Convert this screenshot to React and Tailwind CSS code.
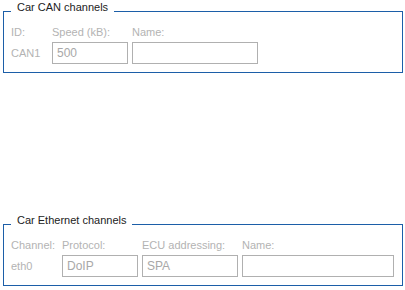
export default function App() {
  return (
    <div className="w-[405px] h-[290px] bg-white font-['Liberation_Sans',Arial,sans-serif] text-[11px] pt-[1px]">
      <fieldset className="mx-[3px] w-[400px] border border-[#1c5ea8] pl-[7px] pt-[5px] pb-[8px]">
        <legend className="px-[6px] pb-[7px] leading-[13px] text-[11px] text-[#222]">
          Car CAN channels
        </legend>
        <div className="grid grid-cols-[37px_76px_126px] gap-x-[4px] gap-y-[3px] items-center text-[#b3b3b3] leading-[13px]">
          <span>ID:</span>
          <span>Speed (kB):</span>
          <span>Name:</span>
          <span>CAN1</span>
          <input
            readOnly
            value="500"
            className="h-[22px] w-full border border-[#b0b0b0] px-[4px] text-[12px] text-[#a8a8a8] outline-none"
          />
          <input
            readOnly
            value=""
            className="h-[22px] w-full border border-[#b0b0b0] px-[4px] text-[12px] text-[#a8a8a8] outline-none"
          />
        </div>
      </fieldset>

      <fieldset className="mx-[3px] mt-[141px] w-[400px] border border-[#1c5ea8] pl-[7px] pt-[5px] pb-[8px]">
        <legend className="px-[6px] pb-[7px] leading-[13px] text-[11px] text-[#222]">
          Car Ethernet channels
        </legend>
        <div className="grid grid-cols-[47px_76px_96px_152px] gap-x-[4px] gap-y-[3px] items-center text-[#b3b3b3] leading-[13px]">
          <span>Channel:</span>
          <span>Protocol:</span>
          <span>ECU addressing:</span>
          <span>Name:</span>
          <span>eth0</span>
          <input
            readOnly
            value="DoIP"
            className="h-[22px] w-full border border-[#b0b0b0] px-[4px] text-[12px] text-[#a8a8a8] outline-none"
          />
          <input
            readOnly
            value="SPA"
            className="h-[22px] w-full border border-[#b0b0b0] px-[4px] text-[12px] text-[#a8a8a8] outline-none"
          />
          <input
            readOnly
            value=""
            className="h-[22px] w-full border border-[#b0b0b0] px-[4px] text-[12px] text-[#a8a8a8] outline-none"
          />
        </div>
      </fieldset>
    </div>
  );
}
